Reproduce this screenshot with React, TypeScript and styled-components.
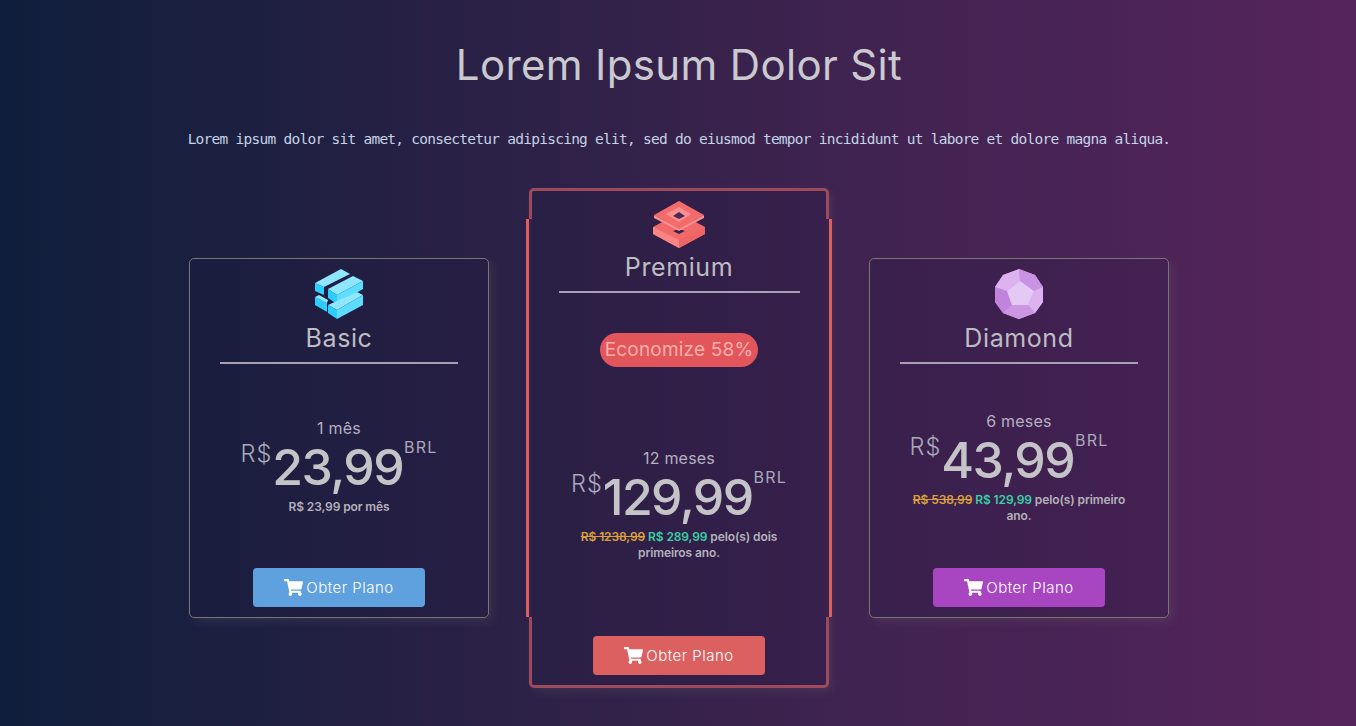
import React from 'react';
import styled, { createGlobalStyle } from 'styled-components';
import { FaShoppingCart } from 'react-icons/fa';

const GlobalStyle = createGlobalStyle`
  html, body {
    margin: 0;
    padding: 0;
  }
  body {
    font-family: Inter, "Liberation Sans", sans-serif;
    background: #101d3b;
  }
`;

const Page = styled.main`
  width: 1356px;
  height: 726px;
  overflow: hidden;
  box-sizing: border-box;
  padding: 37px 0 0 2px;
  display: flex;
  flex-direction: column;
  align-items: center;
  background: linear-gradient(90deg, #0f1e3c 0%, #2c2146 38%, #3f2350 62%, #55245c 100%);
`;

const Title = styled.h1`
  margin: 0;
  height: 56px;
  line-height: 56px;
  font-size: 42px;
  font-weight: 400;
  letter-spacing: 0.35px;
  color: #c9c9cf;
`;

const Lead = styled.p`
  margin: 36px 0 0;
  height: 20px;
  line-height: 20px;
  white-space: nowrap;
  font-family: "DejaVu Sans Mono", monospace;
  font-size: 14.5px;
  letter-spacing: -0.74px;
  color: #c5d3e6;
`;

const Plans = styled.section`
  margin-top: 39px;
  width: 980px;
  display: grid;
  grid-template-columns: repeat(3, 300px);
  column-gap: 40px;
  align-items: center;
`;

const Card = styled.article<{ $featured?: boolean; $accent: string }>`
  position: relative;
  box-sizing: border-box;
  height: ${(p) => (p.$featured ? 500 : 360)}px;
  padding: 10px 0;
  display: flex;
  flex-direction: column;
  align-items: center;
  border: ${(p) => (p.$featured ? '3px solid #9c4a5c' : '1px solid #77776f')};
  border-radius: 5px;
  background: rgba(28, 24, 62, 0.18);
  box-shadow: 4px 4px 10px rgba(130, 130, 130, 0.16);

  ${(p) =>
    p.$featured &&
    `
    &::before, &::after {
      content: '';
      position: absolute;
      top: 28px;
      bottom: 68px;
      width: 6px;
    }
    &::before {
      left: -6px;
      background: linear-gradient(90deg, ${p.$accent} 50%, #30224a 50%);
    }
    &::after {
      right: -6px;
      background: linear-gradient(90deg, #3a234e 50%, ${p.$accent} 50%);
    }
  `}
`;

const Icon = styled.svg`
  display: block;
  flex: none;
`;

const PlanName = styled.h2`
  margin: 3px 0 0;
  height: 32px;
  line-height: 32px;
  font-size: 25px;
  font-weight: 400;
  letter-spacing: 0.6px;
  color: #bdbdc2;
`;

const Divider = styled.hr<{ $featured?: boolean }>`
  box-sizing: border-box;
  flex: none;
  width: ${(p) => (p.$featured ? 241 : 238)}px;
  height: 2px;
  margin: 8px 0 0;
  border: 0;
  background: #a99fb4;
`;

const Badge = styled.span`
  flex: none;
  margin-top: 40px;
  height: 34px;
  line-height: 33px;
  padding: 0 5px;
  border-radius: 17px;
  background: #e2555a;
  color: #ffb0ad;
  font-size: 19px;
  letter-spacing: 0.2px;
`;

const Pricing = styled.div<{ $featured?: boolean }>`
  flex: 1;
  width: 100%;
  display: flex;
  flex-direction: column;
  align-items: center;
  justify-content: center;
  padding-top: ${(p) => (p.$featured ? 3 : 0)}px;
`;

const Period = styled.div`
  font-size: 16px;
  line-height: 20px;
  letter-spacing: 0.2px;
  color: #b5b0c0;
`;

const PriceRow = styled.div<{ $offset?: number }>`
  display: flex;
  align-items: flex-start;
  height: 56px;
  margin-right: ${(p) => p.$offset ?? 0}px;
`;

const Currency = styled.span`
  font-size: 23.5px;
  line-height: 30px;
  margin-top: 1px;
  letter-spacing: 1px;
  font-weight: 300;
  color: #a9a9b9;
`;

const Amount = styled.span`
  font-size: 50px;
  line-height: 58px;
  letter-spacing: -1.6px;
  font-weight: 500;
  color: #c4c4c8;
`;

const Unit = styled.span`
  font-size: 16px;
  line-height: 20px;
  margin: -1px 0 0 1px;
  letter-spacing: 1.2px;
  color: #a9a9b9;
`;

const Note = styled.p`
  margin: 5px 0 -3px;
  min-height: 18px;
  width: 232px;
  font-size: 12px;
  line-height: 16px;
  font-weight: 600;
  text-align: center;
  letter-spacing: -0.1px;
  color: #b4b1ba;
`;

const OldPrice = styled.s`
  color: #d9a13c;
`;

const NewPrice = styled.span`
  color: #38cfa5;
`;

const BuyButton = styled.button<{ $color: string }>`
  flex: none;
  width: 172px;
  height: 39px;
  display: flex;
  align-items: center;
  justify-content: center;
  gap: 3px;
  border: 0;
  border-radius: 4px;
  background: ${(p) => p.$color};
  color: #fff;
  font-family: inherit;
  font-size: 15px;
  font-weight: 300;
  letter-spacing: 0.5px;
  svg {
    width: 19px;
    height: 17px;
  }
`;

const BasicIcon = () => (
  <Icon width="48" height="50" viewBox="0 0 48 50">
    <polygon points="0,14 9,18 9,26 0,22" fill="#2ccdff" />
    <polygon points="0,14 26,0 35,5 9,18" fill="#8fe6ff" />
    <polygon points="0,28 12,34 12,43 0,36" fill="#2ccdff" />
    <polygon points="0,28 4,26 13,31 12,34" fill="#8fe6ff" />
    <polygon points="13,20 38,7 48,12 22,26" fill="#8fe6ff" />
    <polygon points="13,20 22,26 22,35 13,29" fill="#2ccdff" />
    <polygon points="22,26 48,12 48,20 22,35" fill="#5cdcff" />
    <polygon points="13,36 22,41 48,26 42,23" fill="#8fe6ff" />
    <polygon points="13,36 22,41 22,50 13,44" fill="#2ccdff" />
    <polygon points="22,41 48,26 48,36 22,50" fill="#5cdcff" />
  </Icon>
);

const PremiumIcon = () => (
  <Icon width="52" height="47" viewBox="0 0 52 47">
    <polygon points="0,26 26,12 52,26 52,33 26,47 0,33" fill="#f06a6a" />
    <polygon points="0,26 26,39 26,47 0,33" fill="#fb8585" />
    <polygon points="26,39 52,26 52,33 26,47" fill="#ee6565" />
    <polygon points="20,30 26,28 32,30 26,33" fill="#35234f" />
    <polygon points="26,0 51,14 26,28 1,14" fill="#f26c6c" />
    <polygon points="26,6 38,13 26,21 13,13" fill="#fb8f8f" />
    <polygon points="26,11 32,15 26,18 20,15" fill="#4a2a55" />
    <polygon points="1,14 26,28 51,14 51,17 26,30 1,17" fill="#fb8f8f" />
  </Icon>
);

const DiamondIcon = () => (
  <Icon width="48" height="50" viewBox="0 0 48 50">
    <polygon points="24,0 40,6 48,18 48,33 40,44 24,50 8,44 0,33 0,18 8,6" fill="#cc96e3" />
    <polygon points="24,0 8,6 0,18 12,22 25,12" fill="#dcb2f0" />
    <polygon points="24,0 40,6 48,18 39,22 25,12" fill="#ca92e2" />
    <polygon points="48,18 48,33 40,44 33,36 39,22" fill="#dcb2f0" />
    <polygon points="40,44 24,50 8,44 17,36 33,36" fill="#cc96e3" />
    <polygon points="8,44 0,33 0,18 12,22 17,36" fill="#c084dd" />
    <polygon points="25,12 39,22 33,36 17,36 12,22" fill="#e5c9f5" />
  </Icon>
);

const plans = [
  {
    name: 'Basic',
    icon: <BasicIcon />,
    accent: '#5fa0de',
    period: '1 mês',
    amount: '23,99',
    note: <>R$ 23,99 por mês</>,
  },
  {
    name: 'Premium',
    icon: <PremiumIcon />,
    accent: '#dd6060',
    featured: true,
    badge: 'Economize 58%',
    period: '12 meses',
    amount: '129,99',
    note: (
      <>
        <OldPrice>R$ 1238,99</OldPrice> <NewPrice>R$ 289,99</NewPrice> pelo(s) dois primeiros ano.
      </>
    ),
  },
  {
    name: 'Diamond',
    icon: <DiamondIcon />,
    accent: '#a845c0',
    period: '6 meses',
    amount: '43,99',
    priceOffset: 20,
    note: (
      <>
        <OldPrice>R$ 538,99</OldPrice> <NewPrice>R$ 129,99</NewPrice> pelo(s) primeiro ano.
      </>
    ),
  },
];

export default function App() {
  return (
    <Page>
      <GlobalStyle />
      <Title>Lorem Ipsum Dolor Sit</Title>
      <Lead>
        Lorem ipsum dolor sit amet, consectetur adipiscing elit, sed do eiusmod tempor incididunt ut labore et dolore magna aliqua.
      </Lead>
      <Plans>
        {plans.map((plan) => (
          <Card key={plan.name} $featured={plan.featured} $accent={plan.accent}>
            {plan.icon}
            <PlanName>{plan.name}</PlanName>
            <Divider $featured={plan.featured} />
            {plan.badge && <Badge>{plan.badge}</Badge>}
            <Pricing $featured={plan.featured}>
              <Period>{plan.period}</Period>
              <PriceRow $offset={plan.priceOffset}>
                <Currency>R$</Currency>
                <Amount>{plan.amount}</Amount>
                <Unit>BRL</Unit>
              </PriceRow>
              <Note>{plan.note}</Note>
            </Pricing>
            <BuyButton $color={plan.accent}>
              <FaShoppingCart />
              Obter Plano
            </BuyButton>
          </Card>
        ))}
      </Plans>
    </Page>
  );
}
